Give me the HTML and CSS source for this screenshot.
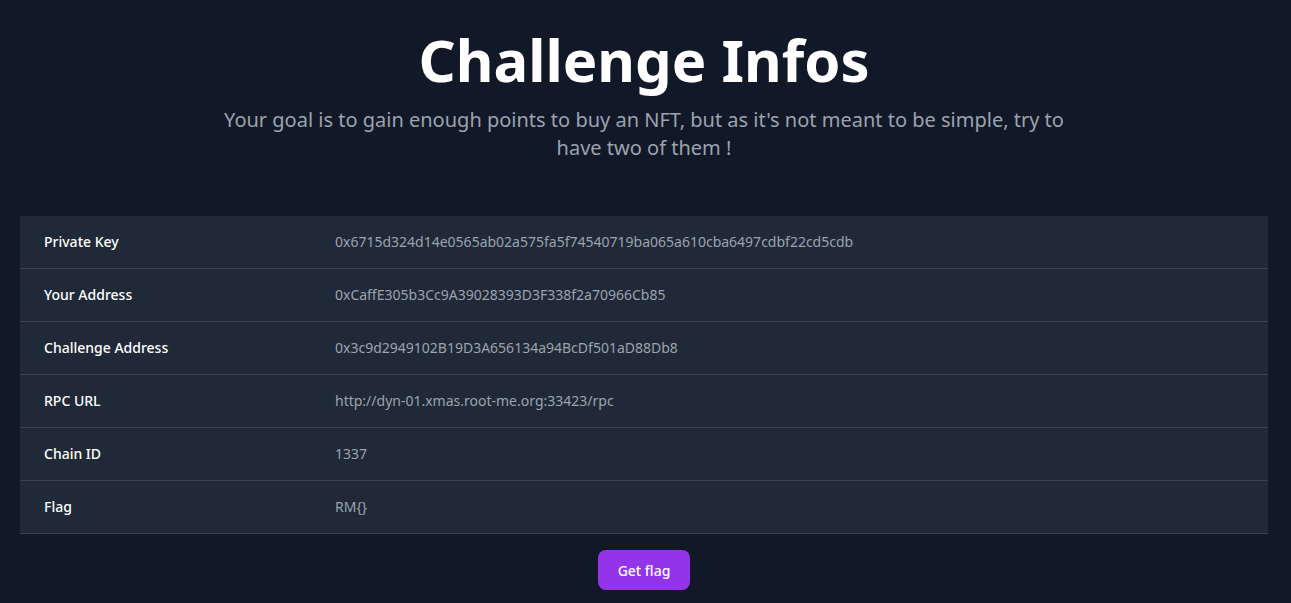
FILE: index.html
```html
<!DOCTYPE html>
<html lang="en">
<head>
<meta charset="utf-8">
<title>Challenge Infos</title>
<link rel="stylesheet" href="styles.css">
</head>
<body>
<main class="page">
  <header class="hero">
    <h1 class="title">Challenge Infos</h1>
    <p class="subtitle">Your goal is to gain enough points to buy an NFT, but as it's not meant to be simple, try to have two of them !</p>
  </header>
  <section class="table">
    <div class="row"><div class="label">Private Key</div><div class="value">0x6715d324d14e0565ab02a575fa5f74540719ba065a610cba6497cdbf22cd5cdb</div></div>
    <div class="row"><div class="label">Your Address</div><div class="value">0xCaffE305b3Cc9A39028393D3F338f2a70966Cb85</div></div>
    <div class="row"><div class="label">Challenge Address</div><div class="value">0x3c9d2949102B19D3A656134a94BcDf501aD88Db8</div></div>
    <div class="row"><div class="label">RPC URL</div><div class="value">http://dyn-01.xmas.root-me.org:33423/rpc</div></div>
    <div class="row"><div class="label">Chain ID</div><div class="value">1337</div></div>
    <div class="row"><div class="label">Flag</div><div class="value">RM{}</div></div>
  </section>
  <div class="actions">
    <button class="btn" type="button">Get flag</button>
  </div>
</main>
</body>
</html>
```

FILE: styles.css
```css
* { box-sizing: border-box; }
html, body { margin: 0; padding: 0; }
body {
  background: #111827;
  font-family: "Noto Sans", "Open Sans", sans-serif;
  color: #ffffff;
  min-height: 603px;
}
.page {
  padding: 30px 23px 0 20px;
  display: flex;
  flex-direction: column;
}
.hero {
  display: flex;
  flex-direction: column;
  align-items: center;
  text-align: center;
}
.title {
  margin: 0;
  font-size: 58px;
  line-height: 60px;
  font-weight: 700;
  color: #ffffff;
}
.subtitle {
  margin: 16px 0 0;
  max-width: 864px;
  font-size: 20px;
  line-height: 28px;
  color: #9ca3af;
}
.table {
  margin-top: 54px;
  background: #1f2937;
  display: flex;
  flex-direction: column;
}
.row {
  display: grid;
  grid-template-columns: 291px 1fr;
  align-items: center;
  height: 53px;
  padding: 0 24px;
  border-bottom: 1px solid #374151;
  font-size: 14px;
  line-height: 20px;
}
.label {
  font-weight: 500;
  color: #ffffff;
}
.value {
  color: #9ca3af;
}
.actions {
  display: flex;
  justify-content: center;
  padding-top: 16px;
}
.btn {
  background: #9333ea;
  color: #ffffff;
  border: 0;
  border-radius: 8px;
  height: 40px;
  padding: 0 20px;
  font-family: "Noto Sans", "Open Sans", sans-serif;
  font-size: 14px;
  font-weight: 500;
}
```
